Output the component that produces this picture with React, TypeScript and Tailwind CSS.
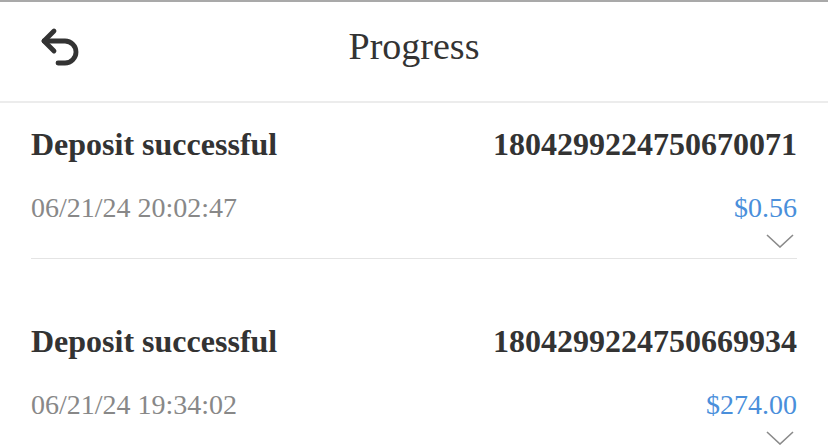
import { Undo2 } from "lucide-react";

type Record = {
  title: string;
  orderNo: string;
  time: string;
  amount: string;
};

const records: Record[] = [
  {
    title: "Deposit successful",
    orderNo: "1804299224750670071",
    time: "06/21/24 20:02:47",
    amount: "$0.56",
  },
  {
    title: "Deposit successful",
    orderNo: "1804299224750669934",
    time: "06/21/24 19:34:02",
    amount: "$274.00",
  },
];

function RecordRow({ item, first }: { item: Record; first: boolean }) {
  return (
    <div className={first ? "pt-[25px]" : "pt-[66px]"}>
      <div className="border-b border-[#e4e4e4] pb-[10px]">
        {/* title + order number */}
        <div className="flex items-center justify-between text-[32px] leading-[32px] font-bold text-[#333]">
          <span>{item.title}</span>
          <span>{item.orderNo}</span>
        </div>
        {/* time + amount */}
        <div className="mt-[34px] flex items-center justify-between text-[28px] leading-[28px]">
          <span className="text-[#888]">{item.time}</span>
          <span className="text-[#4a8fdb]">{item.amount}</span>
        </div>
        <div className="mt-[12px] flex justify-end pr-[3px]">
          <svg width="28" height="14" viewBox="0 0 28 14" fill="none">
            <polyline
              points="1,1 14,13 27,1"
              stroke="#8a8a8a"
              strokeWidth="1.6"
              strokeLinejoin="miter"
            />
          </svg>
        </div>
      </div>
    </div>
  );
}

export default function App() {
  return (
    <div
      className="min-h-[447px] w-[828px] overflow-hidden border-t-2 border-[#a9a9a9] bg-white"
      style={{ fontFamily: '"Liberation Serif", "Times New Roman", serif' }}
    >
      {/* header */}
      <div className="relative flex h-[101px] items-center justify-center border-b-2 border-[#ececec] pb-[12px]">
        <button className="absolute left-[36px] top-[0px] flex h-[89px] items-center text-[#333]">
          <Undo2 size={48} strokeWidth={2.4} />
        </button>
        <h1 className="text-[38px] leading-[38px] text-[#333]">Progress</h1>
      </div>

      {/* list */}
      <div className="px-[31px]">
        {records.map((item, i) => (
          <RecordRow key={item.orderNo} item={item} first={i === 0} />
        ))}
      </div>
    </div>
  );
}
